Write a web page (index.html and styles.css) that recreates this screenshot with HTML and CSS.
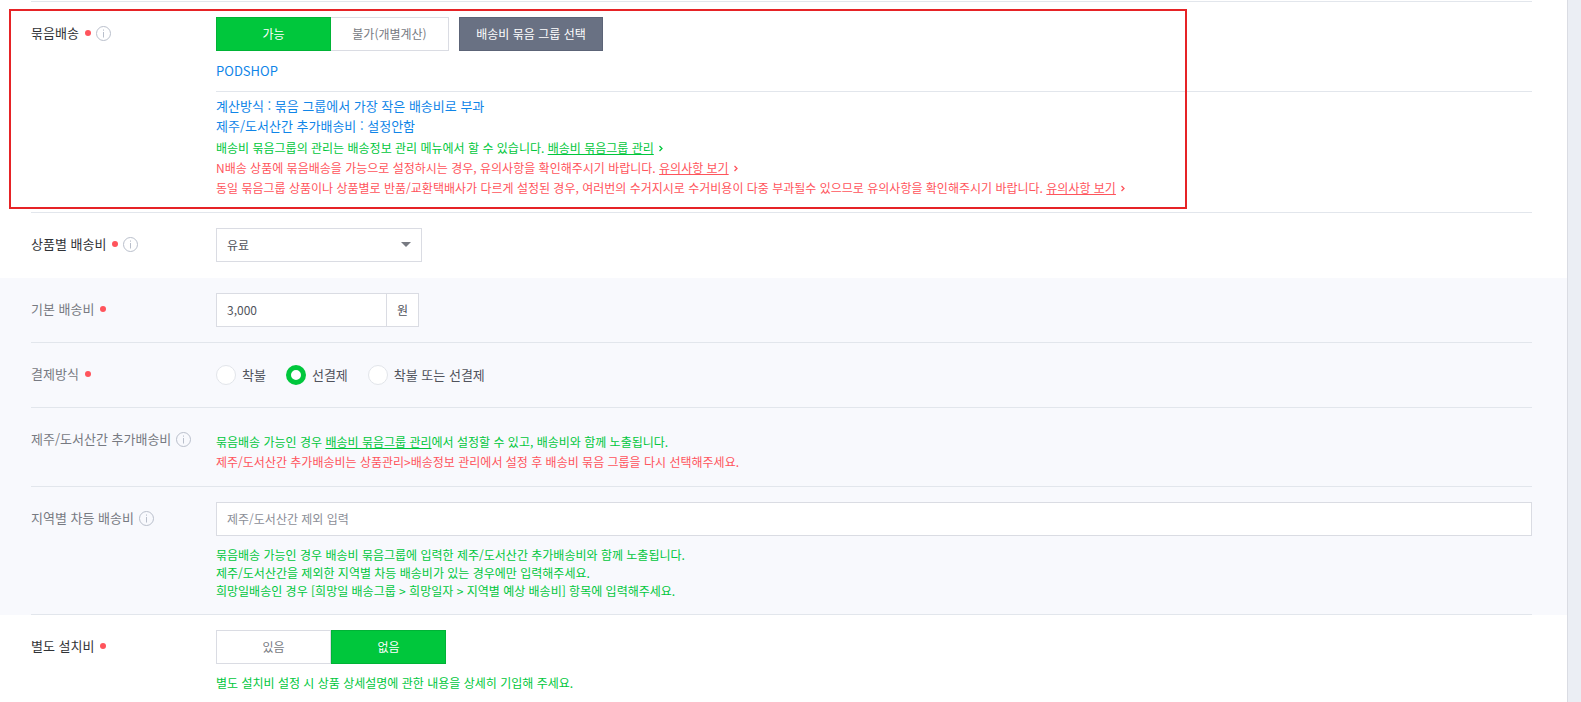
FILE: index.html
```html
<!DOCTYPE html>
<html lang="ko">
<head>
	<meta charset="utf-8">
	<title>배송 설정</title>
	<link rel="stylesheet" href="styles.css">
</head>
<body>
	<svg class="defs" width="0" height="0" aria-hidden="true">
		<symbol id="info" viewBox="0 0 15 15">
			<circle cx="7.5" cy="7.5" r="7" fill="none" stroke="currentColor"/>
			<path d="M7.5 6v5.5M7.5 3.5v1.2" fill="none" stroke="currentColor"/>
		</symbol>
		<symbol id="arrow" viewBox="0 0 4 7">
			<path d="M0.5 1l2.5 2.5l-2.5 2.5" fill="none" stroke="currentColor" stroke-width="1.3"/>
		</symbol>
	</svg>
	<form class="panel">
		<div class="row marked">
			<div class="label">묶음배송<i class="must"></i><svg class="info"><use href="#info"/></svg></div>
			<div class="content">
				<div class="btns">
					<button type="button" class="btn on">가능</button>
					<button type="button" class="btn wide">불가(개별계산)</button>
					<button type="button" class="btn dark">배송비 묶음 그룹 선택</button>
				</div>
				<p class="group">PODSHOP</p>
				<div class="detail">
					<p>계산방식 : 묶음 그룹에서 가장 작은 배송비로 부과</p>
					<p>제주/도서산간 추가배송비 : 설정안함</p>
				</div>
				<p class="help green">배송비 묶음그룹의 관리는 배송정보 관리 메뉴에서 할 수 있습니다. <a href="#">배송비 묶음그룹 관리</a><svg class="arrow"><use href="#arrow"/></svg></p>
				<p class="help red">N배송 상품에 묶음배송을 가능으로 설정하시는 경우, 유의사항을 확인해주시기 바랍니다. <a href="#">유의사항 보기</a><svg class="arrow"><use href="#arrow"/></svg></p>
				<p class="help red">동일 묶음그룹 상품이나 상품별로 반품/교환택배사가 다르게 설정된 경우, 여러번의 수거지시로 수거비용이 다중 부과될수 있으므로 유의사항을 확인해주시기 바랍니다. <a href="#">유의사항 보기</a><svg class="arrow"><use href="#arrow"/></svg></p>
			</div>
		</div>
		<div class="row">
			<label class="label" for="feeType">상품별 배송비<i class="must"></i><svg class="info"><use href="#info"/></svg></label>
			<div class="content">
				<div class="select">
					<select id="feeType">
						<option>유료</option>
					</select>
				</div>
			</div>
		</div>
		<div class="sub">
			<div class="row">
				<label class="label" for="fee">기본 배송비<i class="must"></i></label>
				<div class="content">
					<div class="unit">
						<input type="text" id="fee" class="text" value="3,000">
						<span>원</span>
					</div>
				</div>
			</div>
			<div class="row">
				<div class="label">결제방식<i class="must"></i></div>
				<div class="content radios">
					<label><input type="radio" name="pay">착불</label>
					<label><input type="radio" name="pay" checked>선결제</label>
					<label><input type="radio" name="pay">착불 또는 선결제</label>
				</div>
			</div>
			<div class="row">
				<div class="label">제주/도서산간 추가배송비<svg class="info"><use href="#info"/></svg></div>
				<div class="content">
					<div class="notice">
						<p class="help green">묶음배송 가능인 경우 <a href="#">배송비 묶음그룹 관리</a>에서 설정할 수 있고, 배송비와 함께 노출됩니다.</p>
						<p class="help red">제주/도서산간 추가배송비는 상품관리&gt;배송정보 관리에서 설정 후 배송비 묶음 그룹을 다시 선택해주세요.</p>
					</div>
				</div>
			</div>
			<div class="row">
				<label class="label" for="area">지역별 차등 배송비<svg class="info"><use href="#info"/></svg></label>
				<div class="content">
					<input type="text" id="area" class="text full" placeholder="제주/도서산간 제외 입력">
					<p class="tip green">묶음배송 가능인 경우 배송비 묶음그룹에 입력한 제주/도서산간 추가배송비와 함께 노출됩니다.<br>제주/도서산간을 제외한 지역별 차등 배송비가 있는 경우에만 입력해주세요.<br>희망일배송인 경우 [희망일 배송그룹 &gt; 희망일자 &gt; 지역별 예상 배송비] 항목에 입력해주세요.</p>
				</div>
			</div>
		</div>
		<div class="row">
			<div class="label">별도 설치비<i class="must"></i></div>
			<div class="content">
				<div class="btns">
					<button type="button" class="btn">있음</button>
					<button type="button" class="btn on">없음</button>
				</div>
				<p class="tip green">별도 설치비 설정 시 상품 상세설명에 관한 내용을 상세히 기입해 주세요.</p>
			</div>
		</div>
	</form>
</body>
</html>
```
FILE: styles.css
```css
*{
	box-sizing: border-box;
}
body{
	margin: 0;
	background-color: #ebeef4;
	color: #303236;
	font: 13px/20px "Noto Sans CJK KR", sans-serif;
}
p{
	margin: 0;
}
button, input, select{
	margin: 0;
	font-family: inherit;
}
.defs{
	position: absolute;
}
.panel{
	min-height: 100vh;
	margin-right: 13px;
	padding-top: 1px;
	overflow: hidden;
	background-color: #fff;
	border-right: 1px solid #dadce3;
}
.row{
	display: flex;
	margin: 0 35px 0 31px;
	padding: 15px 0;
	border-bottom: 1px solid #e2e6ec;
}
.row:last-child{
	padding-bottom: 6px;
	border-bottom: none;
}
.panel > .row:nth-child(2){
	border-bottom-color: transparent;
}
.sub{
	background-color: #f8f9fd;
}
.sub .row:last-child{
	padding-bottom: 14px;
	border-bottom: 1px solid #e2e6ec;
}
.label{
	display: flex;
	align-items: center;
	flex: none;
	width: 185px;
	height: 34px;
	padding-bottom: 2px;
	white-space: nowrap;
}
.sub .label{
	color: #777a82;
}
.content{
	flex: 1;
	min-width: 0;
}
.must{
	width: 6px;
	height: 6px;
	margin-left: 6px;
	background-color: #ff545c;
	border-radius: 50%;
}
.info{
	width: 15px;
	height: 15px;
	margin-left: 5px;
	color: #b9bfcb;
}

/* red frame round the bundle shipping row */
.marked{
	position: relative;
	padding-bottom: 14px;
	border-top: 1px solid #e2e6ec;
}
.marked::after{
	content: "";
	position: absolute;
	top: 7px;
	bottom: 3px;
	left: -22px;
	box-sizing: border-box;
	width: 1178px;
	border: 2px solid #e62326;
	pointer-events: none;
}

.btns{
	display: flex;
}
.btn{
	width: 115px;
	height: 34px;
	padding: 0 0 2px;
	background-color: #fff;
	border: 1px solid #dadce3;
	color: #777a82;
	font-size: 12px;
	cursor: pointer;
}
.btn.wide{
	width: 118px;
	border-left: none;
}
.btn.on{
	background-color: #00c73c;
	border-color: #00b336;
	color: #fff;
}
.btn.dark{
	width: 144px;
	margin-left: 10px;
	background-color: #697183;
	border-color: #5c6477;
	color: #fff;
}
.group{
	padding: 10px 0;
	border-bottom: 1px solid #e2e6ec;
	color: #0f85e8;
}
.detail{
	padding: 4px 0 2px;
	color: #0f85e8;
}
.help{
	font-size: 12px;
}
.notice{
	padding-top: 9px;
	margin-bottom: -1px;
}
.tip{
	margin-top: 10px;
	font-size: 12px;
	line-height: 18px;
}
.green{
	color: #00c73c;
}
.red{
	color: #ff545c;
}
.help a{
	color: inherit;
	text-decoration: underline;
}
.arrow{
	width: 4px;
	height: 7px;
	margin-left: 5px;
	vertical-align: 1px;
}
.text{
	width: 171px;
	height: 34px;
	padding: 0 10px 2px;
	background-color: #fff;
	border: 1px solid #dadce3;
	border-radius: 0;
	outline: none;
	color: #50535c;
	font-size: 12px;
}
.text.full{
	display: block;
	width: 100%;
}
.text::placeholder{
	color: #8b8e97;
}
.select{
	position: relative;
	width: 206px;
}
.select select{
	display: block;
	width: 100%;
	height: 34px;
	padding: 0 10px 2px;
	appearance: none;
	background-color: #fff;
	border: 1px solid #dadce3;
	border-radius: 0;
	color: #50535c;
	font-size: 12px;
}
.select::after{
	content: "";
	position: absolute;
	top: 14px;
	right: 11px;
	border: 5px solid transparent;
	border-top-color: #777a82;
	border-bottom: none;
	pointer-events: none;
}
.unit{
	display: flex;
}
.unit span{
	width: 32px;
	height: 34px;
	background-color: #fff;
	border: 1px solid #dadce3;
	border-left: none;
	color: #50535c;
	font-size: 12px;
	line-height: 32px;
	text-align: center;
}
.radios{
	display: flex;
	align-items: center;
	gap: 20px;
	color: #50535c;
}
.radios label{
	display: flex;
	align-items: center;
	gap: 6px;
}
.radios input{
	appearance: none;
	width: 20px;
	height: 20px;
	background-color: #fff;
	border: 1px solid #e2e5ea;
	border-radius: 50%;
}
.radios input:checked{
	border: 5px solid #00c73c;
}
```
